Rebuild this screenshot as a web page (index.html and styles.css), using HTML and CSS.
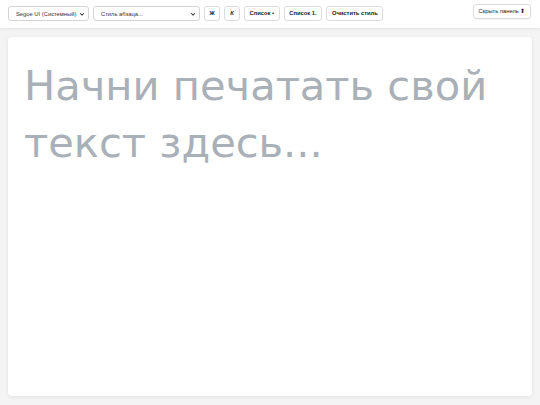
FILE: index.html
```html
<!DOCTYPE html>
<html lang="ru">
<head>
<meta charset="utf-8">
<link rel="stylesheet" href="styles.css">
</head>
<body>
<div class="toolbar">
  <div class="tools">
    <div class="select sel-font"><span>Segoe UI (Системный)</span><svg class="chev" viewBox="0 0 8 8"><path d="M1.5 3 L4 5.5 L6.5 3" fill="none" stroke="#333" stroke-width="1.4"/></svg></div>
    <div class="select sel-style"><span>Стиль абзаца...</span><svg class="chev" viewBox="0 0 8 8"><path d="M1.5 3 L4 5.5 L6.5 3" fill="none" stroke="#333" stroke-width="1.4"/></svg></div>
    <button class="btn sq">Ж</button>
    <button class="btn sq it">К</button>
    <button class="btn">Список •</button>
    <button class="btn">Список 1.</button>
    <button class="btn">Очистить стиль</button>
  </div>
  <button class="btn hide">Скрыть панель ⬆</button>
</div>
<div class="card">
  <div class="editor">Начни печатать свой текст здесь...</div>
</div>
</body>
</html>
```
FILE: styles.css
```css
html, body { margin: 0; padding: 0; }
body {
  background: #f4f4f5;
  font-family: "Liberation Sans", Arial, sans-serif;
  height: 405px;
  overflow: hidden;
}
.toolbar {
  height: 28px;
  background: #fff;
  box-shadow: 0 1px 3px rgba(0,0,0,0.08);
  display: flex;
  align-items: flex-start;
  justify-content: space-between;
  padding: 0 9px 0 8px;
  box-sizing: border-box;
}
.tools {
  display: flex;
  gap: 4px;
  margin-top: 6px;
}
.select {
  height: 15px;
  box-sizing: border-box;
  border: 1px solid #d4d4d4;
  border-radius: 3px;
  background: #fff;
  display: flex;
  align-items: center;
  justify-content: space-between;
  font-size: 5.8px;
  color: #333;
  padding: 0 3px 0 7px;
}
.sel-font { width: 81px; }
.sel-style { width: 107px; }
.chev { width: 6px; height: 6px; }
.btn {
  height: 15px;
  box-sizing: border-box;
  border: 1px solid #dcdcdc;
  border-radius: 3px;
  background: #fff;
  font-family: "Liberation Sans", Arial, sans-serif;
  font-size: 5.8px;
  font-weight: bold;
  color: #222;
  padding: 0 4.6px;
  line-height: 13px;
  margin: 0;
}
.sq { width: 16px; padding: 0; }
.it { font-style: italic; }
.hide {
  margin-top: 4px;
  height: 15px;
  font-weight: normal;
  width: 58px;
  padding: 0;
  box-shadow: 0 1px 1px rgba(0,0,0,0.05);
}
.card {
  margin: 9px 8px 0 8px;
  height: 359px;
  background: #fff;
  border-radius: 4px;
  box-shadow: 0 1px 4px rgba(0,0,0,0.08);
  padding: 20px 16px;
  box-sizing: border-box;
}
.editor {
  font-family: "DejaVu Sans", sans-serif;
  font-size: 41.6px;
  line-height: 57px;
  color: #a9b0b8;
}
```
